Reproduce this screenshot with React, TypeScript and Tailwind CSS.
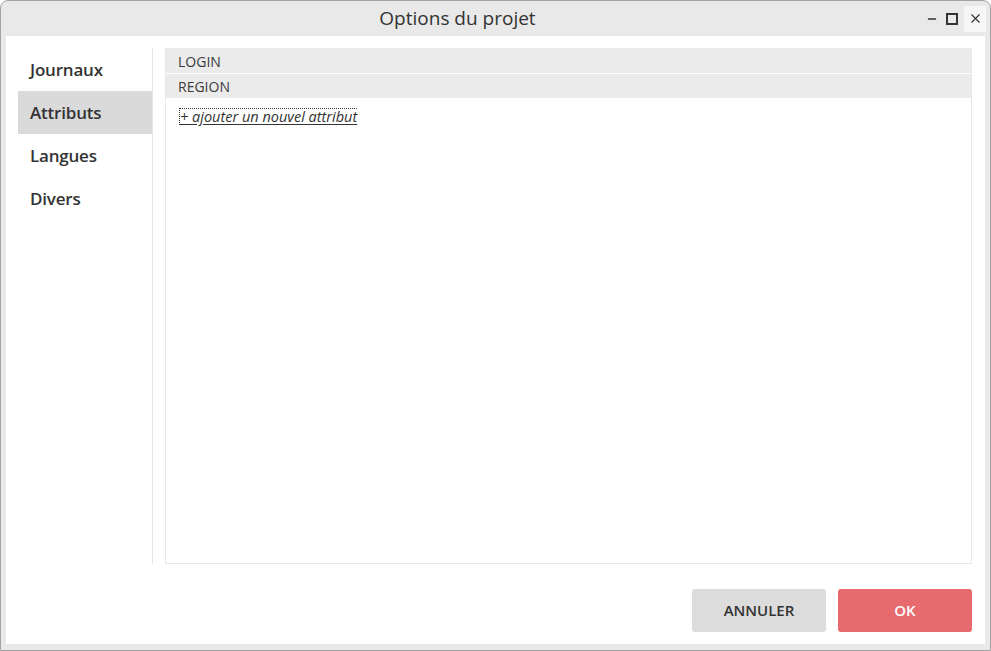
import { Minus, X } from 'lucide-react';

const items = ['Journaux', 'Attributs', 'Langues', 'Divers'];
const attributes = ['LOGIN', 'REGION'];

export default function App() {
    return (
        <div className="flex h-[651px] w-[991px] flex-col overflow-hidden rounded-t-[8px] border border-[#a3a3a3] bg-[#e9e9e9] font-['Open_Sans',sans-serif] text-[#333]">
            {/* title bar */}
            <div className="flex h-[35px] shrink-0 items-center">
                <div className="flex-1 pr-[8px] text-center text-[19px] leading-none font-medium">
                    Options du projet
                </div>
                <div className="flex h-full items-center">
                    <button className="flex h-[26px] w-[20px] items-center justify-center text-[#333]">
                        <Minus className="size-[12px]" strokeWidth={3} />
                    </button>
                    <button className="flex h-[26px] w-[20px] items-center justify-center">
                        <span className="block size-[12px] border-2 border-[#333]" />
                    </button>
                    <button className="mr-[4px] ml-[2px] flex h-[26px] w-[22px] items-center justify-center bg-[#f6f6f6] text-[#333]">
                        <X className="size-[15px]" strokeWidth={1.8} />
                    </button>
                </div>
            </div>

            <div className="mx-[5px] mb-[6px] flex flex-1 flex-col bg-white pt-[12px] pr-[13px] pb-[12px] pl-[12px]">
                <div className="flex flex-1 gap-[12px]">
                    <nav className="w-[135px] border-r border-[#e6e6e6]">
                        {items.map((item) => (
                            <div
                                key={item}
                                className={`flex h-[43px] w-[134px] items-center pl-[12px] text-[17px] font-semibold tracking-[-0.2px] ${
                                    item === 'Attributs' ? 'bg-[#dadada]' : ''
                                }`}
                            >
                                {item}
                            </div>
                        ))}
                    </nav>
                    <section className="flex flex-1 flex-col gap-[1px] border border-[#e8e8e8]">
                        {attributes.map((attr) => (
                            <div
                                key={attr}
                                className="flex h-[24px] items-center bg-[#ebebeb] pl-[12px] text-[14px] text-[#3a3a3a]"
                            >
                                {attr}
                            </div>
                        ))}
                        <div className="pt-[5px] pl-[13px]">
                            <a className="inline-block border-t border-l border-dotted border-[#333] text-[14.5px] leading-[16px] italic text-[#333] underline underline-offset-2">
                                + ajouter un nouvel attribut
                            </a>
                        </div>
                    </section>
                </div>
                <div className="flex justify-end gap-[12px] pt-[25px]">
                    <button className="h-[43px] w-[134px] rounded-[3px] bg-[#dcdcdc] text-[15px] font-semibold text-[#333]">
                        ANNULER
                    </button>
                    <button className="h-[43px] w-[134px] rounded-[3px] bg-[#e66a6e] text-[15px] font-semibold text-white">
                        OK
                    </button>
                </div>
            </div>
        </div>
    );
}
